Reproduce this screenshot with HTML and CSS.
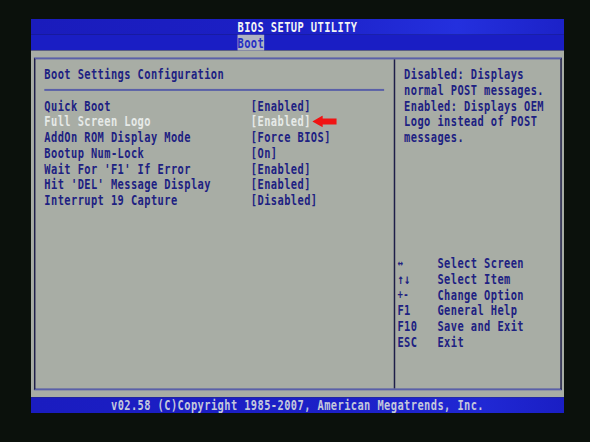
FILE: index.html
```html
<!DOCTYPE html>
<html>
<head>
<meta charset="utf-8">
<title>BIOS SETUP UTILITY</title>
<link rel="stylesheet" href="styles.css">
</head>
<body>
<div class="crt">
<div class="screen">
  <div class="titlebar">BIOS SETUP UTILITY</div>
  <div class="tabbar"><span class="tab">Boot</span></div>
  <div class="main">
    <div class="frame">
      <div class="left">
        <div class="heading">Boot Settings Configuration</div>
        <div class="rule"></div>
        <div class="items">
          <span>Quick Boot</span><span>[Enabled]</span>
          <span class="sel">Full Screen Logo</span><span class="sel">[Enabled]</span>
          <span>AddOn ROM Display Mode</span><span>[Force BIOS]</span>
          <span>Bootup Num-Lock</span><span>[On]</span>
          <span>Wait For 'F1' If Error</span><span>[Enabled]</span>
          <span>Hit 'DEL' Message Display</span><span>[Enabled]</span>
          <span>Interrupt 19 Capture</span><span>[Disabled]</span>
        </div>
      </div>
      <div class="right">
        <div class="help">Disabled: Displays
normal POST messages.
Enabled: Displays OEM
Logo instead of POST
messages.</div>
        <div class="keys">
          <span class="sym">↔</span><span>Select Screen</span>
          <span>↑↓</span><span>Select Item</span>
          <span class="sym">+-</span><span>Change Option</span>
          <span>F1</span><span>General Help</span>
          <span>F10</span><span>Save and Exit</span>
          <span>ESC</span><span>Exit</span>
        </div>
      </div>
    </div>
  </div>
  <div class="footer">v02.58 (C)Copyright 1985-2007, American Megatrends, Inc.</div>
  <svg class="arrow" viewBox="0 0 33 12" width="33" height="12"><polygon points="0,6 14,0 14,3 33,3 33,9 14,9 14,12" fill="#f01414"/></svg>
</div>
</div>
</body>
</html>
```

FILE: styles.css
```css
html, body {
  margin: 0;
  padding: 0;
  width: 590px;
  height: 442px;
  overflow: hidden;
  background: #0b110c;
}
body {
  padding: 19px 0 0 31px;
  box-sizing: border-box;
}
.crt {
  width: 533px;
  height: 394px;
  overflow: hidden;
}
.screen {
  position: relative;
  width: 720px;
  height: 400px;
  transform-origin: 0 0;
  transform: scale(0.7403, 0.985);
  font-family: "DejaVu Sans Mono", monospace;
  font-weight: bold;
  font-size: 14px;
  line-height: 16px;
  letter-spacing: 0.57px;
  white-space: nowrap;
  color: #1d2182;
}
.titlebar {
  height: 16px;
  text-align: center;
  color: #f4f4f4;
  background: linear-gradient(90deg, #1a1cbc 0%, #1c20c6 50%, #2430de 80%, #1c22c8 100%);
}
.tabbar {
  height: 16px;
  padding-left: 279px;
  background: #1a1ec4;
}
.tab {
  display: inline-block;
  width: 36px;
  height: 16px;
  background: #b0b4c2;
  color: #2630c4;
}
.main {
  height: 352px;
  box-sizing: border-box;
  padding: 7px 3.5px;
  background: #a8ada5;
}
.frame {
  height: 338px;
  box-sizing: border-box;
  display: flex;
  border-top: 2px solid #5a60a8;
  border-bottom: 2px solid #5a60a8;
  border-left: 2px solid #1e1e48;
  border-right: 2px solid #1e1e48;
}
.left {
  width: 486px;
  flex: none;
  box-sizing: border-box;
  padding: 7px 0 0 12.5px;
  border-right: 2px solid #1e1e48;
}
.heading {
  height: 16px;
}
.rule {
  width: 459px;
  height: 7px;
  border-bottom: 2px solid #5a60a8;
  margin-bottom: 7px;
}
.items {
  display: grid;
  grid-template-columns: 279px auto;
  grid-auto-rows: 16px;
}
.sel {
  color: #e6eae8;
}
.right {
  flex: 1;
  padding: 7px 0 0 3.5px;
}
.help {
  padding-left: 9px;
  white-space: pre;
}
.keys {
  margin-top: 112px;
  display: grid;
  grid-template-columns: 54px auto;
  grid-auto-rows: 16px;
}
.sym {
  font-size: 12px;
}
.footer {
  height: 16px;
  text-align: center;
  color: #c4c8dc;
  background: linear-gradient(90deg, #1a1cc0 0%, #1c20c8 60%, #2028d4 85%, #1a1ec4 100%);
}
.arrow {
  position: absolute;
  left: 380px;
  top: 98px;
}
```
